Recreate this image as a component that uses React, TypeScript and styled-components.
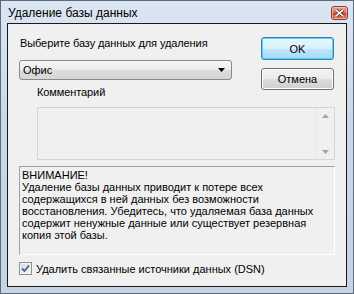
import * as React from 'react';
import styled, { createGlobalStyle } from 'styled-components';

const GlobalStyle = createGlobalStyle`
    html, body {
        margin: 0;
        padding: 0;
        background: #ffffff;
    }
    body {
        font-family: 'Liberation Sans', Arial, sans-serif;
        font-size: 11px;
        color: #000;
    }
`;

const Window = styled.div`
    box-sizing: border-box;
    width: 354px;
    height: 294px;
    display: flex;
    flex-direction: column;
    border: 1px solid #5b6b7c;
    background: linear-gradient(180deg, #dbe6f2 0%, #c9d8e8 40%, #c5d4e5 100%);
    padding: 0 6px 6px 6px;
`;

const TitleBar = styled.div`
    height: 22px;
    display: flex;
    align-items: center;
    justify-content: space-between;
`;

const Title = styled.span`
    font-family: 'Liberation Sans', Arial, sans-serif;
    font-size: 12px;
    color: #000;
    padding-left: 1px;
    padding-top: 1px;
`;

const CloseButton = styled.div`
    box-sizing: border-box;
    width: 17px;
    height: 14px;
    margin-right: -1px;
    margin-top: 1px;
    border: 1px solid #8a4035;
    border-radius: 3px;
    background: linear-gradient(180deg, #e8a898 0%, #d8735c 45%, #c84a33 55%, #dc8068 100%);
    box-shadow: inset 0 0 0 1px rgba(255, 220, 210, 0.5);
    display: flex;
    align-items: center;
    justify-content: center;
`;

const Client = styled.div`
    flex: 1;
    box-sizing: border-box;
    border: 1px solid #1a1a1a;
    background: #f0f0f0;
    padding: 13px 11px 0 11px;
    display: flex;
    flex-direction: column;
`;

const TopRow = styled.div`
    display: flex;
    justify-content: space-between;
    height: 67px;
`;

const LeftColumn = styled.div`
    display: flex;
    flex-direction: column;
`;

const Label = styled.label<{ indent?: number; gapAbove?: number }>`
    line-height: 13px;
    padding-left: ${({ indent }) => indent ?? 0}px;
    margin-top: ${({ gapAbove }) => gapAbove ?? 0}px;
    white-space: nowrap;
    letter-spacing: -0.1px;
`;

const Combo = styled.div`
    box-sizing: border-box;
    width: 213px;
    height: 20px;
    margin-top: 10px;
    border: 1px solid #8a8a8a;
    border-radius: 3px;
    background: linear-gradient(180deg, #f6f6f6 0%, #ececec 50%, #dcdcdc 51%, #d6d6d6 100%);
    display: flex;
    align-items: center;
    justify-content: space-between;
    padding: 0 6px 0 3px;
`;

const ButtonColumn = styled.div`
    display: flex;
    flex-direction: column;
    gap: 8px;
    padding-right: 1px;
`;

const Button = styled.div<{ primary?: boolean }>`
    box-sizing: border-box;
    width: 73px;
    height: ${({ primary }) => (primary ? 23 : 22)}px;
    border: 1px solid ${({ primary }) => (primary ? '#3c7fb1' : '#707070')};
    border-radius: 3px;
    background: ${({ primary }) =>
        primary
            ? 'linear-gradient(180deg, #eaf6fd 0%, #d9f0fc 50%, #bee6fd 51%, #a7d9f5 100%)'
            : 'linear-gradient(180deg, #f2f2f2 0%, #ebebeb 50%, #dddddd 51%, #cfcfcf 100%)'};
    box-shadow: ${({ primary }) =>
        primary ? 'inset 0 0 0 1px #48d4fb' : 'inset 0 0 0 1px #fcfcfc'};
    display: flex;
    align-items: center;
    justify-content: center;
`;

const Memo = styled.div`
    box-sizing: border-box;
    height: 53px;
    margin: 3px 0 0 18px;
    border: 1px solid #d5d5d5;
    background: #f0f0f0;
    display: flex;
    justify-content: flex-end;
`;

const ScrollBar = styled.div`
    width: 17px;
    border-left: 1px solid #e6e6e6;
    display: flex;
    flex-direction: column;
    justify-content: space-between;
    align-items: center;
    padding: 6px 0 5px;
`;

const Warning = styled.div`
    box-sizing: border-box;
    height: 89px;
    margin-top: 6px;
    border-top: 1px solid #a0a0a0;
    border-left: 1px solid #a0a0a0;
    border-right: 1px solid #ffffff;
    border-bottom: 1px solid #ffffff;
    padding: 2px 2px 0;
    line-height: 12px;
    white-space: nowrap;
`;

const CheckRow = styled.div`
    display: flex;
    align-items: center;
    gap: 4px;
    margin-top: 7px;
`;

const CheckBox = styled.div`
    box-sizing: border-box;
    width: 13px;
    height: 13px;
    border: 1px solid #8e8f8f;
    background: linear-gradient(135deg, #dcdcdc 0%, #f4f4f4 100%);
    box-shadow: inset 0 0 0 1px #f4f4f4;
    display: flex;
    align-items: center;
    justify-content: center;
`;

const App = () => {
    return (
        <>
            <GlobalStyle />
            <Window>
                <TitleBar>
                    <Title>Удаление базы данных</Title>
                    <CloseButton>
                        <svg width="9" height="8" viewBox="0 0 9 8">
                            <path
                                d="M1 1 L8 7 M8 1 L1 7"
                                stroke="#5a2a22"
                                strokeWidth="3"
                                strokeLinecap="square"
                            />
                            <path
                                d="M1 1 L8 7 M8 1 L1 7"
                                stroke="#ffffff"
                                strokeWidth="1.6"
                                strokeLinecap="square"
                            />
                        </svg>
                    </CloseButton>
                </TitleBar>
                <Client>
                    <TopRow>
                        <LeftColumn>
                            <Label indent={1}>Выберите базу данных для удаления</Label>
                            <Combo>
                                <span>Офис</span>
                                <svg width="7" height="4" viewBox="0 0 7 4">
                                    <path d="M0 0 H7 L3.5 4 Z" fill="#000" />
                                </svg>
                            </Combo>
                            <Label indent={18} gapAbove={6}>
                                Комментарий
                            </Label>
                        </LeftColumn>
                        <ButtonColumn>
                            <Button primary>OK</Button>
                            <Button>Отмена</Button>
                        </ButtonColumn>
                    </TopRow>
                    <Memo>
                        <ScrollBar>
                            <svg width="7" height="4" viewBox="0 0 7 4">
                                <path d="M0 4 H7 L3.5 0 Z" fill="#a3a3a3" />
                            </svg>
                            <svg width="7" height="4" viewBox="0 0 7 4">
                                <path d="M0 0 H7 L3.5 4 Z" fill="#a3a3a3" />
                            </svg>
                        </ScrollBar>
                    </Memo>
                    <Warning>
                        ВНИМАНИЕ!
                        <br />
                        Удаление базы данных приводит к потере всех
                        <br />
                        содержащихся в ней данных без возможности
                        <br />
                        восстановления. Убедитесь, что удаляемая база данных
                        <br />
                        содержит ненужные данные или существует резервная
                        <br />
                        копия этой базы.
                    </Warning>
                    <CheckRow>
                        <CheckBox>
                            <svg width="9" height="9" viewBox="0 0 9 9">
                                <path
                                    d="M1 4.5 L3.5 7 L8 1.5"
                                    stroke="#4a5f97"
                                    strokeWidth="1.8"
                                    fill="none"
                                />
                            </svg>
                        </CheckBox>
                        <span>Удалить связанные источники данных (DSN)</span>
                    </CheckRow>
                </Client>
            </Window>
        </>
    );
};

export default App;
